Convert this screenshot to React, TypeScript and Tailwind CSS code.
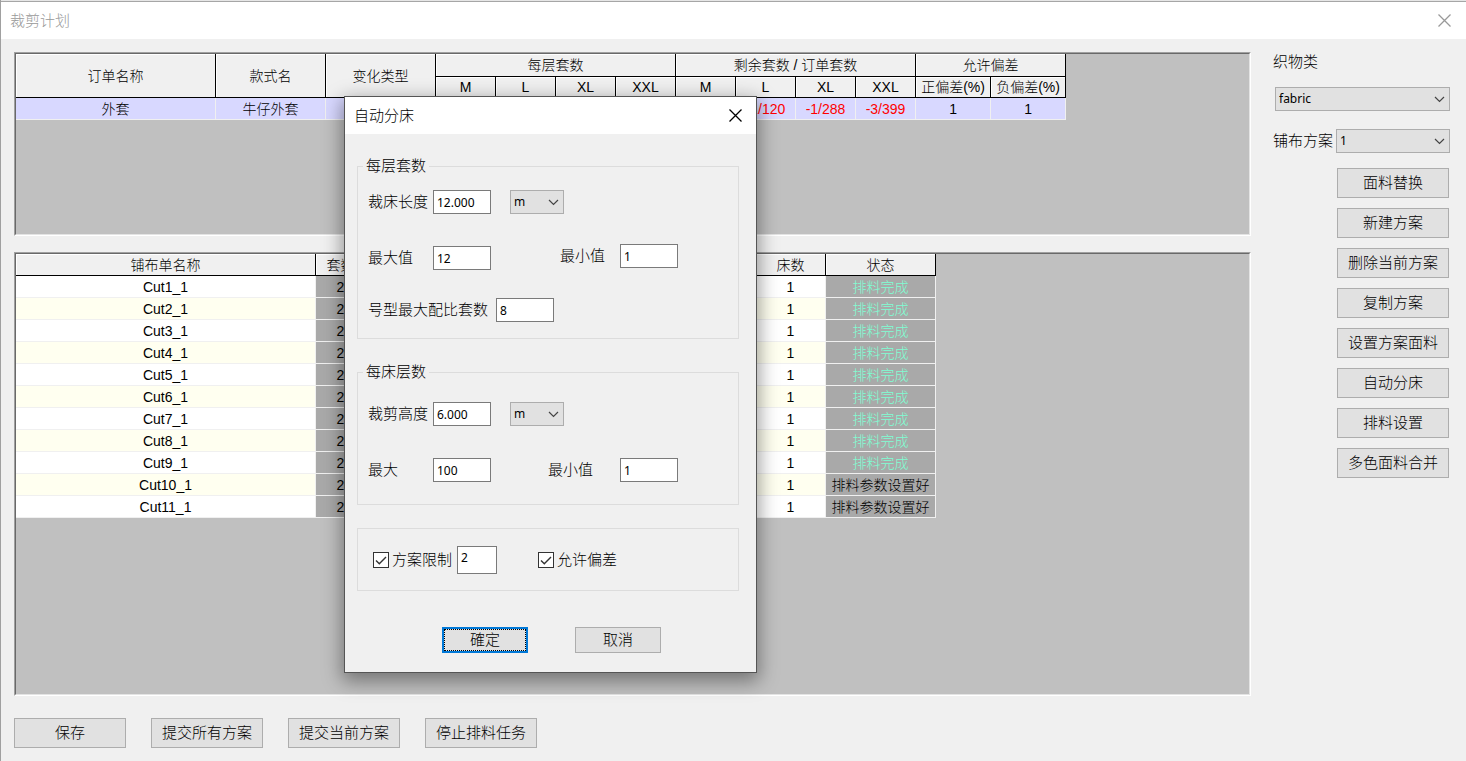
import { useState } from "react";
import type { ReactNode } from "react";
import clsx from "clsx";

const SIZES = ["M", "L", "XL", "XXL"];
const REMAINING = ["-1/88", "-1/120", "-1/288", "-3/399"];

const CUTS = Array.from({ length: 11 }, (_, i) => ({
  name: `Cut${i + 1}_1`,
  sets: 2,
  beds: 1,
  done: i < 9,
}));

const SIDE_ACTIONS = [
  "面料替换",
  "新建方案",
  "删除当前方案",
  "复制方案",
  "设置方案面料",
  "自动分床",
  "排料设置",
  "多色面料合并",
];

const BOTTOM_ACTIONS = ["保存", "提交所有方案", "提交当前方案", "停止排料任务"];

function CloseIcon() {
  return (
    <svg
      width="13"
      height="13"
      viewBox="0 0 13 13"
      fill="none"
      stroke="currentColor"
      strokeWidth="1.3"
    >
      <path d="M0.5 0.5L12.5 12.5M12.5 0.5L0.5 12.5" />
    </svg>
  );
}

function PushButton({
  children,
  className,
  onClick,
}: {
  children: ReactNode;
  className?: string;
  onClick?: () => void;
}) {
  return (
    <button
      type="button"
      onClick={onClick}
      className={clsx(
        "shrink-0 whitespace-nowrap border border-[#adadad] bg-[#e1e1e1] text-[15px] leading-5",
        className,
      )}
    >
      {children}
    </button>
  );
}

function Select({
  id,
  label,
  options,
  className,
}: {
  id: string;
  label?: string;
  options: string[];
  className?: string;
}) {
  return (
    <div className={clsx("relative h-6", className)}>
      <select
        id={id}
        aria-label={label}
        className="h-full w-full appearance-none border border-[#adadad] bg-[#e1e1e1] pl-[3px] pr-5 font-['Noto_Sans',sans-serif] text-xs font-normal outline-none"
      >
        {options.map((option) => (
          <option key={option}>{option}</option>
        ))}
      </select>
      <svg
        className="pointer-events-none absolute right-[5px] top-[9px]"
        width="11"
        height="7"
        viewBox="0 0 11 7"
        fill="none"
        stroke="#444"
        strokeWidth="1.2"
      >
        <path d="M1 1L5.5 5.5L10 1" />
      </svg>
    </div>
  );
}

function NumberField({
  id,
  label,
  value,
  labelClass,
  className,
}: {
  id: string;
  label: string;
  value: string;
  labelClass: string;
  className?: string;
}) {
  return (
    <div className={clsx("flex items-center", className)}>
      <label htmlFor={id} className={clsx("whitespace-nowrap", labelClass)}>
        {label}
      </label>
      <TextBox id={id} value={value} className="h-6 w-[58px]" />
    </div>
  );
}

function TextBox({
  id,
  value,
  label,
  className,
}: {
  id: string;
  value: string;
  label?: string;
  className: string;
}) {
  return (
    <input
      id={id}
      type="text"
      aria-label={label}
      defaultValue={value}
      className={clsx(
        "border border-[#7a7a7a] bg-white px-[3px] font-['Noto_Sans',sans-serif] text-xs font-normal outline-none",
        className,
      )}
    />
  );
}

function CheckBox({ id, label }: { id: string; label: string }) {
  return (
    <div className="flex items-center gap-[3px]">
      <div className="relative size-4">
        <input
          id={id}
          type="checkbox"
          defaultChecked
          className="peer block size-4 appearance-none border border-[#333] bg-white"
        />
        <svg
          className="pointer-events-none absolute inset-0 hidden peer-checked:block"
          width="16"
          height="16"
          viewBox="0 0 16 16"
          fill="none"
          stroke="#333"
          strokeWidth="1.4"
        >
          <path d="M3 8.5L6.3 11.8L13 5" />
        </svg>
      </div>
      <label htmlFor={id}>{label}</label>
    </div>
  );
}

// Sunken grid frame shared by both tables
function GridFrame({ children, className }: { children: ReactNode; className?: string }) {
  return (
    <div
      className={clsx(
        "border border-b-white border-l-[#a0a0a0] border-r-white border-t-[#a0a0a0]",
        className,
      )}
    >
      <div className="h-full overflow-hidden border border-b-[#e3e3e3] border-l-[#696969] border-r-[#e3e3e3] border-t-[#696969] bg-[#c0c0c0]">
        {children}
      </div>
    </div>
  );
}

const TH =
  "border-b border-r border-black bg-[#f0f0f0] p-0 text-center font-light shadow-[inset_1px_1px_0_#fff]";
const TD = "border-b border-r border-[#f0f0f0] p-0 text-center";
const TABLE =
  "table-fixed border-separate border-spacing-0 whitespace-nowrap text-sm leading-5";

function OrderTable() {
  return (
    <table className={clsx(TABLE, "w-[1050px]")}>
      <colgroup>
        <col className="w-[200px]" />
        <col className="w-[110px]" />
        <col className="w-[110px]" />
        {[...SIZES, ...SIZES].map((size, i) => (
          <col key={`${size}-${i}`} className="w-[60px]" />
        ))}
        <col className="w-[75px]" />
        <col className="w-[75px]" />
      </colgroup>
      <thead>
        <tr className="h-[23px]">
          <th rowSpan={2} className={TH}>订单名称</th>
          <th rowSpan={2} className={TH}>款式名</th>
          <th rowSpan={2} className={TH}>变化类型</th>
          <th colSpan={4} className={TH}>每层套数</th>
          <th colSpan={4} className={TH}>剩余套数 / 订单套数</th>
          <th colSpan={2} className={TH}>允许偏差</th>
        </tr>
        <tr className="h-[21px]">
          {[...SIZES, ...SIZES].map((size, i) => (
            <th key={`${size}-${i}`} className={TH}>{size}</th>
          ))}
          <th className={TH}>正偏差(%)</th>
          <th className={TH}>负偏差(%)</th>
        </tr>
      </thead>
      <tbody>
        <tr className="h-[22px] bg-[#d8d8ff]">
          <td className={TD}>外套</td>
          <td className={TD}>牛仔外套</td>
          <td className={TD} />
          {SIZES.map((size) => (
            <td key={size} className={TD} />
          ))}
          {REMAINING.map((value) => (
            <td key={value} className={clsx(TD, "text-[#ff0000]")}>{value}</td>
          ))}
          <td className={TD}>1</td>
          <td className={TD}>1</td>
        </tr>
      </tbody>
    </table>
  );
}

function CutTable() {
  return (
    <table className={clsx(TABLE, "w-[920px]")}>
      <colgroup>
        <col className="w-[300px]" />
        <col className="w-[50px]" />
        <col className="w-[390px]" />
        <col className="w-[70px]" />
        <col className="w-[110px]" />
      </colgroup>
      <thead>
        <tr className="h-[22px]">
          <th className={TH}>铺布单名称</th>
          <th className={TH}>套数</th>
          <th className={TH} />
          <th className={TH}>床数</th>
          <th className={TH}>状态</th>
        </tr>
      </thead>
      <tbody>
        {CUTS.map((cut) => (
          <tr key={cut.name} className="h-[22px] bg-white even:bg-[#fffff0]">
            <td className={TD}>{cut.name}</td>
            <td className={clsx(TD, "bg-[#a9a9a9]")}>{cut.sets}</td>
            <td className={TD} />
            <td className={TD}>{cut.beds}</td>
            <td className={clsx(TD, "bg-[#a9a9a9]", cut.done && "text-[#7fffd4]")}>
              {cut.done ? "排料完成" : "排料参数设置好"}
            </td>
          </tr>
        ))}
      </tbody>
    </table>
  );
}

function AutoSplitDialog({ onClose }: { onClose: () => void }) {
  return (
    <div
      role="dialog"
      aria-labelledby="dialog-title"
      className="absolute left-[343px] top-24 w-[413px] border border-[#555] bg-[#f0f0f0] text-[15px] leading-5 shadow-[0_6px_18px_2px_rgba(0,0,0,0.4)]"
    >
      <div className="flex h-[37px] items-center justify-between bg-white pl-[9px] pr-[14px]">
        <h2 id="dialog-title">自动分床</h2>
        <button type="button" aria-label="关闭" onClick={onClose}>
          <CloseIcon />
        </button>
      </div>

      <div className="pb-[19px] pl-3 pr-[17px] pt-[22px]">
        <fieldset className="border border-[#dcdcdc] px-[10px] pb-4">
          <legend className="-ml-[5px] px-[3px]">每层套数</legend>
          <div className="flex pt-[14px]">
            <NumberField id="bed-length" label="裁床长度" value="12.000" labelClass="w-[65px]" />
            <Select id="length-unit" label="裁床长度单位" options={["m", "cm"]} className="ml-[19px] w-[54px]" />
          </div>
          <div className="mt-[30px] flex h-[26px] items-start">
            <NumberField id="sets-max" label="最大值" value="12" labelClass="w-[65px]" className="self-end" />
            <NumberField id="sets-min" label="最小值" value="1" labelClass="w-[60px]" className="ml-[69px]" />
          </div>
          <NumberField
            id="size-ratio"
            label="号型最大配比套数"
            value="8"
            labelClass="w-32"
            className="mt-7"
          />
        </fieldset>

        <fieldset className="mt-[23px] border border-[#dcdcdc] px-[10px] pb-[22px]">
          <legend className="-ml-[5px] px-[3px]">每床层数</legend>
          <div className="flex pt-5">
            <NumberField id="cut-height" label="裁剪高度" value="6.000" labelClass="w-[65px]" />
            <Select id="height-unit" label="裁剪高度单位" options={["m", "cm"]} className="ml-[19px] w-[54px]" />
          </div>
          <div className="mt-8 flex">
            <NumberField id="layers-max" label="最大" value="100" labelClass="w-[65px]" />
            <NumberField id="layers-min" label="最小值" value="1" labelClass="w-[72px]" className="ml-[57px]" />
          </div>
        </fieldset>

        <div className="mt-[23px] flex h-[63px] items-center border border-[#dcdcdc] pl-[15px]">
          <CheckBox id="plan-limit" label="方案限制" />
          <TextBox id="plan-limit-value" label="方案限制值" value="2" className="ml-[5px] h-7 w-10 pb-1" />
          <div className="ml-[41px]">
            <CheckBox id="allow-deviation" label="允许偏差" />
          </div>
        </div>

        <div className="mt-9 flex gap-[47px] pl-[85px]">
          <button
            type="button"
            onClick={onClose}
            className="h-[26px] w-[86px] border-2 border-[#0078d7] bg-[#e1e1e1]"
          >
            <span className="flex h-full items-center justify-center border border-dotted border-black">
              確定
            </span>
          </button>
          <PushButton onClick={onClose} className="h-[26px] w-[86px]">
            取消
          </PushButton>
        </div>
      </div>
    </div>
  );
}

export default function App() {
  const [dialogOpen, setDialogOpen] = useState(true);

  return (
    <div className="relative flex min-h-screen flex-col border-l border-[#a0a0a0] bg-[#f0f0f0] font-['Liberation_Sans','Noto_Sans_CJK_SC',sans-serif] font-light text-black">
      <div className="h-px bg-[#e6e6e6]" />
      <header className="flex h-[38px] items-center justify-between border-t border-[#a6a6a6] bg-white pl-[9px] pr-[15px] text-[#999]">
        <h1 className="text-[15px] font-light leading-5">裁剪计划</h1>
        <button type="button" aria-label="关闭窗口">
          <CloseIcon />
        </button>
      </header>

      <div className="flex flex-1 pb-[13px] pl-[13px] pr-4 pt-[13px]">
        <main className="flex min-w-0 flex-1 flex-col">
          <GridFrame className="h-[184px]">
            <OrderTable />
          </GridFrame>
          <GridFrame className="mt-4 flex flex-1 flex-col *:flex-1">
            <CutTable />
          </GridFrame>
          <div className="mt-[22px] flex gap-[25px]">
            {BOTTOM_ACTIONS.map((action) => (
              <PushButton key={action} className="h-[30px] w-28">
                {action}
              </PushButton>
            ))}
          </div>
        </main>

        <aside className="ml-[22px] w-[177px] shrink-0 text-[15px] leading-5">
          <label htmlFor="fabric-kind" className="block">
            织物类
          </label>
          <Select id="fabric-kind" options={["fabric"]} className="ml-[2px] mt-[15px]" />
          <div className="mt-[18px] flex items-center">
            <label htmlFor="plan" className="w-[63px] whitespace-nowrap">
              铺布方案
            </label>
            <Select id="plan" options={["1", "2"]} className="flex-1" />
          </div>
          <div className="mr-px mt-[15px] flex flex-col items-end gap-[10px]">
            {SIDE_ACTIONS.map((action) => (
              <PushButton
                key={action}
                className="h-[30px] w-28"
                onClick={action === "自动分床" ? () => setDialogOpen(true) : undefined}
              >
                {action}
              </PushButton>
            ))}
          </div>
        </aside>
      </div>

      {dialogOpen && <AutoSplitDialog onClose={() => setDialogOpen(false)} />}
    </div>
  );
}
